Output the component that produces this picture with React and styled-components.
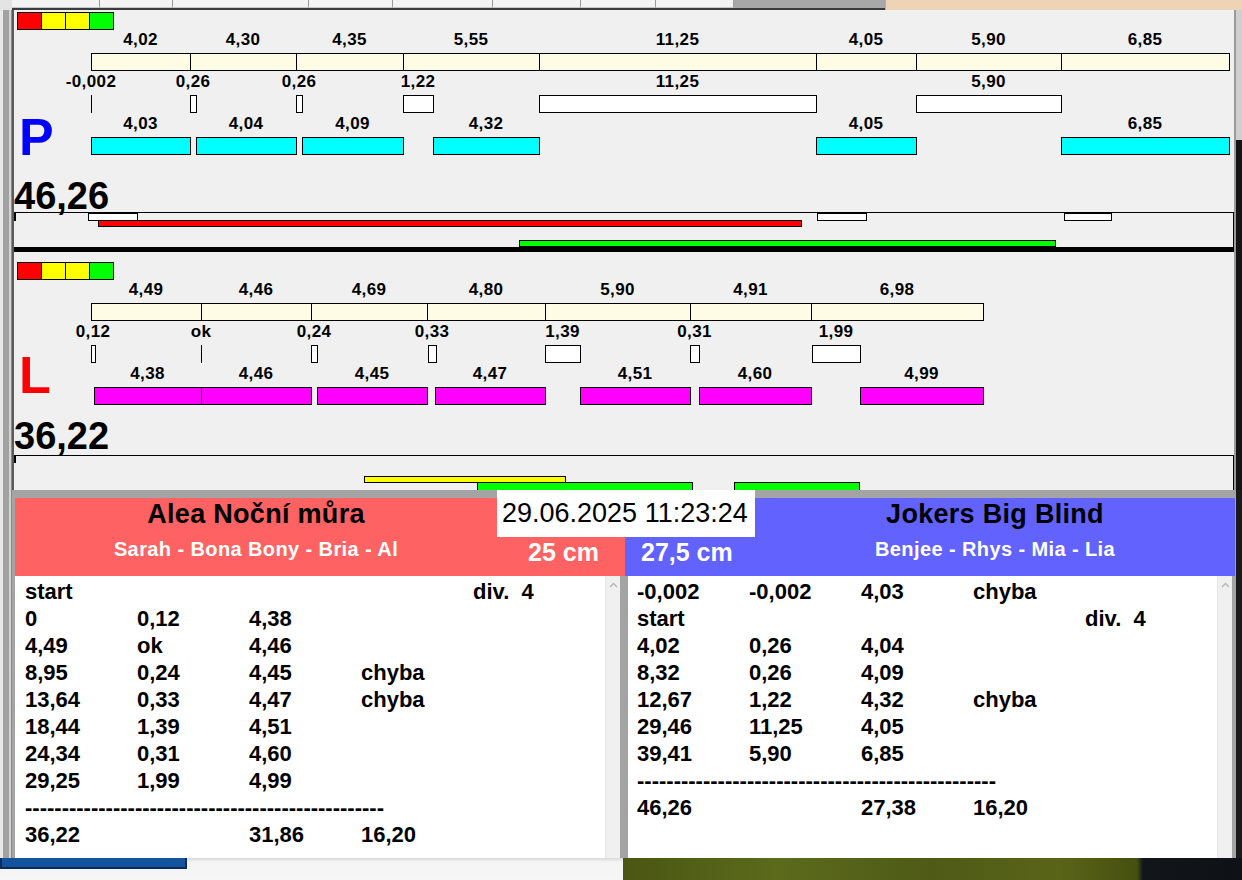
import React from 'react';
import styled, { createGlobalStyle } from 'styled-components';

const GlobalStyle = createGlobalStyle`
  html, body { margin: 0; padding: 0; }
  body {
    background: #b4b4b4;
    font-family: "Liberation Sans", Arial, sans-serif;
  }
`;

const tracks = [
  {
    letter: 'P',
    letterColor: '#0000ff',
    letterPad: 0,
    total: '46,26',
    legendTop: 2,
    totalTop: 24,
    timelineTop: 0,
    lanes: [
      {
        color: '#fffce6',
        items: [
          [0, 99, '4,02'], [99, 106, '4,30'], [205, 107, '4,35'], [312, 136, '5,55'],
          [448, 277, '11,25'], [725, 100, '4,05'], [825, 145, '5,90'], [970, 168, '6,85'],
        ],
      },
      {
        color: '#ffffff',
        items: [
          [0, 0, '-0,002'], [99, 6, '0,26'], [205, 6, '0,26'], [312, 30, '1,22'],
          [448, 277, '11,25'], [825, 145, '5,90'],
        ],
      },
      {
        color: '#00ffff',
        items: [
          [0, 99, '4,03'], [105, 100, '4,04'], [211, 101, '4,09'], [342, 106, '4,32'],
          [725, 100, '4,05'], [970, 168, '6,85'],
        ],
      },
    ],
    timeline: [
      { l: 0, t: 0, w: 0, h: 8 },
      { l: 74, t: 0, w: 50, h: 8, c: '#ffffff' },
      { l: 803, t: 0, w: 50, h: 8, c: '#ffffff' },
      { l: 1050, t: 0, w: 48, h: 8, c: '#ffffff' },
      { l: 84, t: 7, w: 704, h: 7, c: '#ff0000' },
      { l: 505, t: 27, w: 537, h: 7, c: '#00ff00' },
    ],
  },
  {
    letter: 'L',
    letterColor: '#ff0000',
    letterPad: 12,
    total: '36,22',
    legendTop: 10,
    totalTop: 14,
    timelineTop: 3,
    lanes: [
      {
        color: '#fffce6',
        items: [
          [0, 110, '4,49'], [110, 110, '4,46'], [220, 116, '4,69'], [336, 118, '4,80'],
          [454, 145, '5,90'], [599, 121, '4,91'], [720, 172, '6,98'],
        ],
      },
      {
        color: '#ffffff',
        items: [
          [0, 4, '0,12'], [110, 0, 'ok'], [220, 6, '0,24'], [337, 8, '0,33'],
          [454, 35, '1,39'], [599, 9, '0,31'], [721, 48, '1,99'],
        ],
      },
      {
        color: '#ff00ff',
        items: [
          [3, 107, '4,38'], [110, 110, '4,46'], [226, 110, '4,45'], [344, 110, '4,47'],
          [489, 110, '4,51'], [608, 112, '4,60'], [769, 123, '4,99'],
        ],
      },
    ],
    timeline: [
      { l: 0, t: 0, w: 0, h: 7 },
      { l: 350, t: 20, w: 202, h: 7, c: '#ffff00' },
      { l: 463, t: 26, w: 216, h: 10, c: '#00ff00' },
      { l: 720, t: 26, w: 126, h: 10, c: '#00ff00' },
    ],
  },
];

const teams = [
  {
    name: 'Alea Noční můra',
    members: 'Sarah - Bona Bony - Bria - Al',
    height: '25 cm',
    color: '#ff6262',
    rows: [
      ['start', '', '', '', 'div.  4'],
      ['0', '0,12', '4,38'],
      ['4,49', 'ok', '4,46'],
      ['8,95', '0,24', '4,45', 'chyba'],
      ['13,64', '0,33', '4,47', 'chyba'],
      ['18,44', '1,39', '4,51'],
      ['24,34', '0,31', '4,60'],
      ['29,25', '1,99', '4,99'],
      'dash',
      ['36,22', '', '31,86', '16,20'],
    ],
  },
  {
    name: 'Jokers Big Blind',
    members: 'Benjee - Rhys - Mia - Lia',
    height: '27,5 cm',
    color: '#6262ff',
    rows: [
      ['-0,002', '-0,002', '4,03', 'chyba'],
      ['start', '', '', '', 'div.  4'],
      ['4,02', '0,26', '4,04'],
      ['8,32', '0,26', '4,09'],
      ['12,67', '1,22', '4,32', 'chyba'],
      ['29,46', '11,25', '4,05'],
      ['39,41', '5,90', '6,85'],
      'dash',
      ['46,26', '', '27,38', '16,20'],
    ],
  },
];

const tabWidths = [87, 72, 135, 83, 99, 87, 74, 77];

function Track({ track }) {
  return (
    <Panel>
      <Legend $top={track.legendTop}>
        {['#ff0000', '#ffff00', '#ffff00', '#00ff00'].map((c, i) => (
          <Swatch key={i} $color={c} />
        ))}
      </Legend>
      <ChartRow>
        <LetterCol $pad={track.letterPad}>
          <BigLetter $color={track.letterColor}>{track.letter}</BigLetter>
        </LetterCol>
        <Lanes>
          {track.lanes.map((lane, li) => (
            <Lane key={li}>
              {lane.items.map(([left, width, label], i) => (
                <Slot key={i} style={{ left, width }}>
                  <SlotLabel>{label}</SlotLabel>
                  {width === 0 ? <Tick /> : <Bar $color={lane.color} />}
                </Slot>
              ))}
            </Lane>
          ))}
        </Lanes>
      </ChartRow>
      <Total $top={track.totalTop}>{track.total}</Total>
      <Timeline $top={track.timelineTop}>
        {track.timeline.map((b, i) => (
          <TimeBar
            key={i}
            $color={b.c}
            style={{ left: b.l, top: b.t, width: b.w || 1, height: b.h }}
          />
        ))}
      </Timeline>
    </Panel>
  );
}

function TeamList({ team, first }) {
  return (
    <Pane $first={first}>
      <PaneBody $pad={first ? 10 : 9}>
        {team.rows.map((row, i) =>
          row === 'dash' ? (
            <Dashes key={i}>{'-'.repeat(49)}</Dashes>
          ) : (
            <Row key={i}>
              {row.map((cell, j) => (
                <span key={j}>{cell}</span>
              ))}
            </Row>
          )
        )}
      </PaneBody>
      <Scroll>
        <svg width="9" height="6" viewBox="0 0 9 6">
          <polyline points="1,5 4.5,1.5 8,5" fill="none" stroke="#b4b4b4" strokeWidth="1.3" />
        </svg>
      </Scroll>
    </Pane>
  );
}

export default function App() {
  const [red, blue] = teams;
  return (
    <Screen>
      <GlobalStyle />
      <TabStrip>
        <Tabs>
          {tabWidths.map((w, i) => (
            <Tab key={i} style={{ width: w }} />
          ))}
          <TabRest />
        </Tabs>
        <Peach />
      </TabStrip>
      <Middle>
        <LeftFrame />
        <Window>
          <Track track={tracks[0]} />
          <Divider />
          <Track track={tracks[1]} />
        </Window>
        <RightFrame />
      </Middle>
      <BottomRow>
        <LeftFrame />
        <Results>
          <DateBox>29.06.2025 11:23:24</DateBox>
          <Heads>
            <TeamHead $color={red.color} $cols="482px 1fr">
              <NameBlock>
                <TeamName>{red.name}</TeamName>
                <Members>{red.members}</Members>
              </NameBlock>
              <Height $side="right">{red.height}</Height>
            </TeamHead>
            <TeamHead $color={blue.color} $cols="130px 1fr">
              <Height $side="left">{blue.height}</Height>
              <NameBlock>
                <TeamName>{blue.name}</TeamName>
                <Members>{blue.members}</Members>
              </NameBlock>
            </TeamHead>
          </Heads>
          <Lists>
            <TeamList team={red} first />
            <TeamList team={blue} />
          </Lists>
        </Results>
        <DarkEdge />
      </BottomRow>
      <Footer>
        <FooterLeft>
          <TaskButton />
        </FooterLeft>
        <FooterRight />
      </Footer>
    </Screen>
  );
}

const Screen = styled.div`
  width: 1242px;
  height: 880px;
  overflow: hidden;
  display: flex;
  flex-direction: column;
  background: #b4b4b4;
`;

const TabStrip = styled.div`
  display: flex;
  height: 10px;
  flex-shrink: 0;
`;

const Tabs = styled.div`
  display: flex;
  width: 885px;
  padding-left: 12px;
  box-sizing: border-box;
  background: linear-gradient(90deg, #e4e4e4 0 12px, transparent 12px);
`;

const Tab = styled.div`
  height: 7px;
  background: #f4f4f4;
  border-right: 1px solid #9c9c9c;
  border-bottom: 1px solid #c8c8c8;
  box-shadow: 0 2px 0 #3c3c3c;
`;

const TabRest = styled.div`
  flex: 1;
  height: 8px;
  background: #a8a8a8;
  box-shadow: 0 2px 0 #3c3c3c;
`;

const Peach = styled.div`
  flex: 1;
  background: #efd3b7;
  border-left: 1px solid #c8a888;
`;

const Middle = styled.div`
  display: flex;
  height: 480px;
  flex-shrink: 0;
`;

const LeftFrame = styled.div`
  width: 12px;
  flex-shrink: 0;
  background: linear-gradient(90deg, #e8e8e8 0 3px, #a2a2a2 3px 9px, #d4d4d4 9px 11px, #8a8a8a 11px 12px);
`;

const Window = styled.div`
  width: 1222px;
  flex-shrink: 0;
  box-sizing: border-box;
  border-left: 2px solid #5a5a5a;
  background: #f0f0f0;
  display: flex;
  flex-direction: column;
  overflow: hidden;
`;

const RightFrame = styled.div`
  flex: 1;
  background: linear-gradient(180deg, #cfcfcf 0 130px, #141414 130px);
  border-left: 2px solid #9a9a9a;
`;

const Panel = styled.div`
  display: flex;
  flex-direction: column;
`;

const Legend = styled.div`
  display: flex;
  margin: ${(p) => p.$top}px 0 0 3px;
  height: 18px;
`;

const Swatch = styled.div`
  width: 25px;
  height: 18px;
  box-sizing: border-box;
  background: ${(p) => p.$color};
  border: 1px solid #000;
  margin-right: -1px;
`;

const ChartRow = styled.div`
  display: flex;
`;

const LetterCol = styled.div`
  width: 77px;
  flex-shrink: 0;
  display: flex;
  align-items: flex-end;
  padding: 0 0 ${(p) => p.$pad}px 5px;
  box-sizing: border-box;
`;

const BigLetter = styled.div`
  font-size: 52px;
  font-weight: bold;
  line-height: 38px;
  color: ${(p) => p.$color};
`;

const Lanes = styled.div`
  flex: 1;
  display: flex;
  flex-direction: column;
`;

const Lane = styled.div`
  position: relative;
  height: 42px;
`;

const Slot = styled.div`
  position: absolute;
  top: 0;
  height: 42px;
`;

const SlotLabel = styled.div`
  position: absolute;
  top: 0;
  left: 50%;
  transform: translateX(-50%);
  white-space: nowrap;
  font-size: 17px;
  font-weight: bold;
  letter-spacing: 0.4px;
  line-height: 20px;
  color: #000;
`;

const Bar = styled.div`
  position: absolute;
  top: 23px;
  left: 0;
  width: calc(100% + 1px);
  height: 18px;
  box-sizing: border-box;
  border: 1px solid #000;
  background: ${(p) => p.$color};
`;

const Tick = styled.div`
  position: absolute;
  top: 23px;
  left: 0;
  width: 1px;
  height: 18px;
  background: #000;
`;

const Total = styled.div`
  margin-top: ${(p) => p.$top}px;
  font-size: 38px;
  font-weight: bold;
  line-height: 32px;
  height: 32px;
  color: #000;
`;

const Timeline = styled.div`
  position: relative;
  margin-top: ${(p) => p.$top}px;
  height: 35px;
  box-sizing: border-box;
  border-top: 1px solid #000;
  border-right: 1px solid #000;
  overflow: hidden;
`;

const TimeBar = styled.div`
  position: absolute;
  box-sizing: border-box;
  border: 1px solid #000;
  background: ${(p) => p.$color || '#000'};
`;

const Divider = styled.div`
  height: 5px;
  background: #000;
  flex-shrink: 0;
`;

const BottomRow = styled.div`
  display: flex;
  height: 368px;
  flex-shrink: 0;
`;

const Results = styled.div`
  position: relative;
  width: 1224px;
  flex-shrink: 0;
  box-sizing: border-box;
  padding: 8px 1px 0 3px;
  background: #a4a4a4;
  display: flex;
  flex-direction: column;
`;

const DarkEdge = styled.div`
  flex: 1;
  background: #1a1a1a;
`;

const DateBox = styled.div`
  position: absolute;
  top: 0;
  left: 485px;
  width: 258px;
  height: 47px;
  padding-left: 5px;
  box-sizing: border-box;
  background: #fff;
  font-size: 27px;
  line-height: 46px;
  color: #000;
  white-space: nowrap;
  z-index: 2;
`;

const Heads = styled.div`
  display: grid;
  grid-template-columns: 610px 610px;
  height: 78px;
`;

const TeamHead = styled.div`
  display: grid;
  grid-template-columns: ${(p) => p.$cols};
  background: ${(p) => p.$color};
`;

const NameBlock = styled.div`
  display: flex;
  flex-direction: column;
  align-items: center;
`;

const TeamName = styled.div`
  font-size: 27px;
  font-weight: bold;
  letter-spacing: 0.3px;
  line-height: 32px;
  color: #000;
  white-space: nowrap;
`;

const Members = styled.div`
  margin-top: 7px;
  font-size: 20px;
  font-weight: bold;
  letter-spacing: 0.4px;
  line-height: 24px;
  color: #fff;
  white-space: nowrap;
`;

const Height = styled.div`
  padding-top: 39px;
  font-size: 25px;
  font-weight: bold;
  line-height: 30px;
  color: #fff;
  white-space: nowrap;
  text-align: ${(p) => (p.$side === 'right' ? 'right' : 'left')};
  padding-right: ${(p) => (p.$side === 'right' ? 26 : 0)}px;
  padding-left: ${(p) => (p.$side === 'left' ? 16 : 0)}px;
`;

const Lists = styled.div`
  display: flex;
  height: 282px;
`;

const Pane = styled.div`
  display: flex;
  width: ${(p) => (p.$first ? 605 : 604)}px;
  margin-right: ${(p) => (p.$first ? 8 : 0)}px;
  background: #fff;
`;

const PaneBody = styled.div`
  flex: 1;
  padding: 2px 0 0 ${(p) => p.$pad}px;
`;

const Row = styled.div`
  display: grid;
  grid-template-columns: repeat(5, 112px);
  height: 27px;
  font-size: 22px;
  font-weight: bold;
  line-height: 27px;
  color: #000;
  white-space: pre;
`;

const Dashes = styled.div`
  height: 27px;
  font-size: 22px;
  font-weight: bold;
  line-height: 27px;
  color: #000;
  white-space: nowrap;
`;

const Scroll = styled.div`
  width: 15px;
  flex-shrink: 0;
  background: #f0f0f0;
  border-left: 1px solid #e6e6e6;
  display: flex;
  justify-content: center;
  padding-top: 6px;
  box-sizing: border-box;
`;

const Footer = styled.div`
  display: flex;
  flex: 1;
`;

const FooterLeft = styled.div`
  width: 623px;
  background: linear-gradient(180deg, #d8d8d8 0, #f4f4f4 4px, #f6f6f6 100%);
`;

const TaskButton = styled.div`
  width: 187px;
  height: 11px;
  box-sizing: border-box;
  background: #14549e;
  border: 2px solid #0a2c5a;
  border-top: none;
`;

const FooterRight = styled.div`
  flex: 1;
  background: linear-gradient(90deg, #4a5612 0%, #5c6a1c 25%, #4e5a16 50%, #5a6418 70%, #46500f 83%, #12161a 84%, #0e1216 100%);
`;
